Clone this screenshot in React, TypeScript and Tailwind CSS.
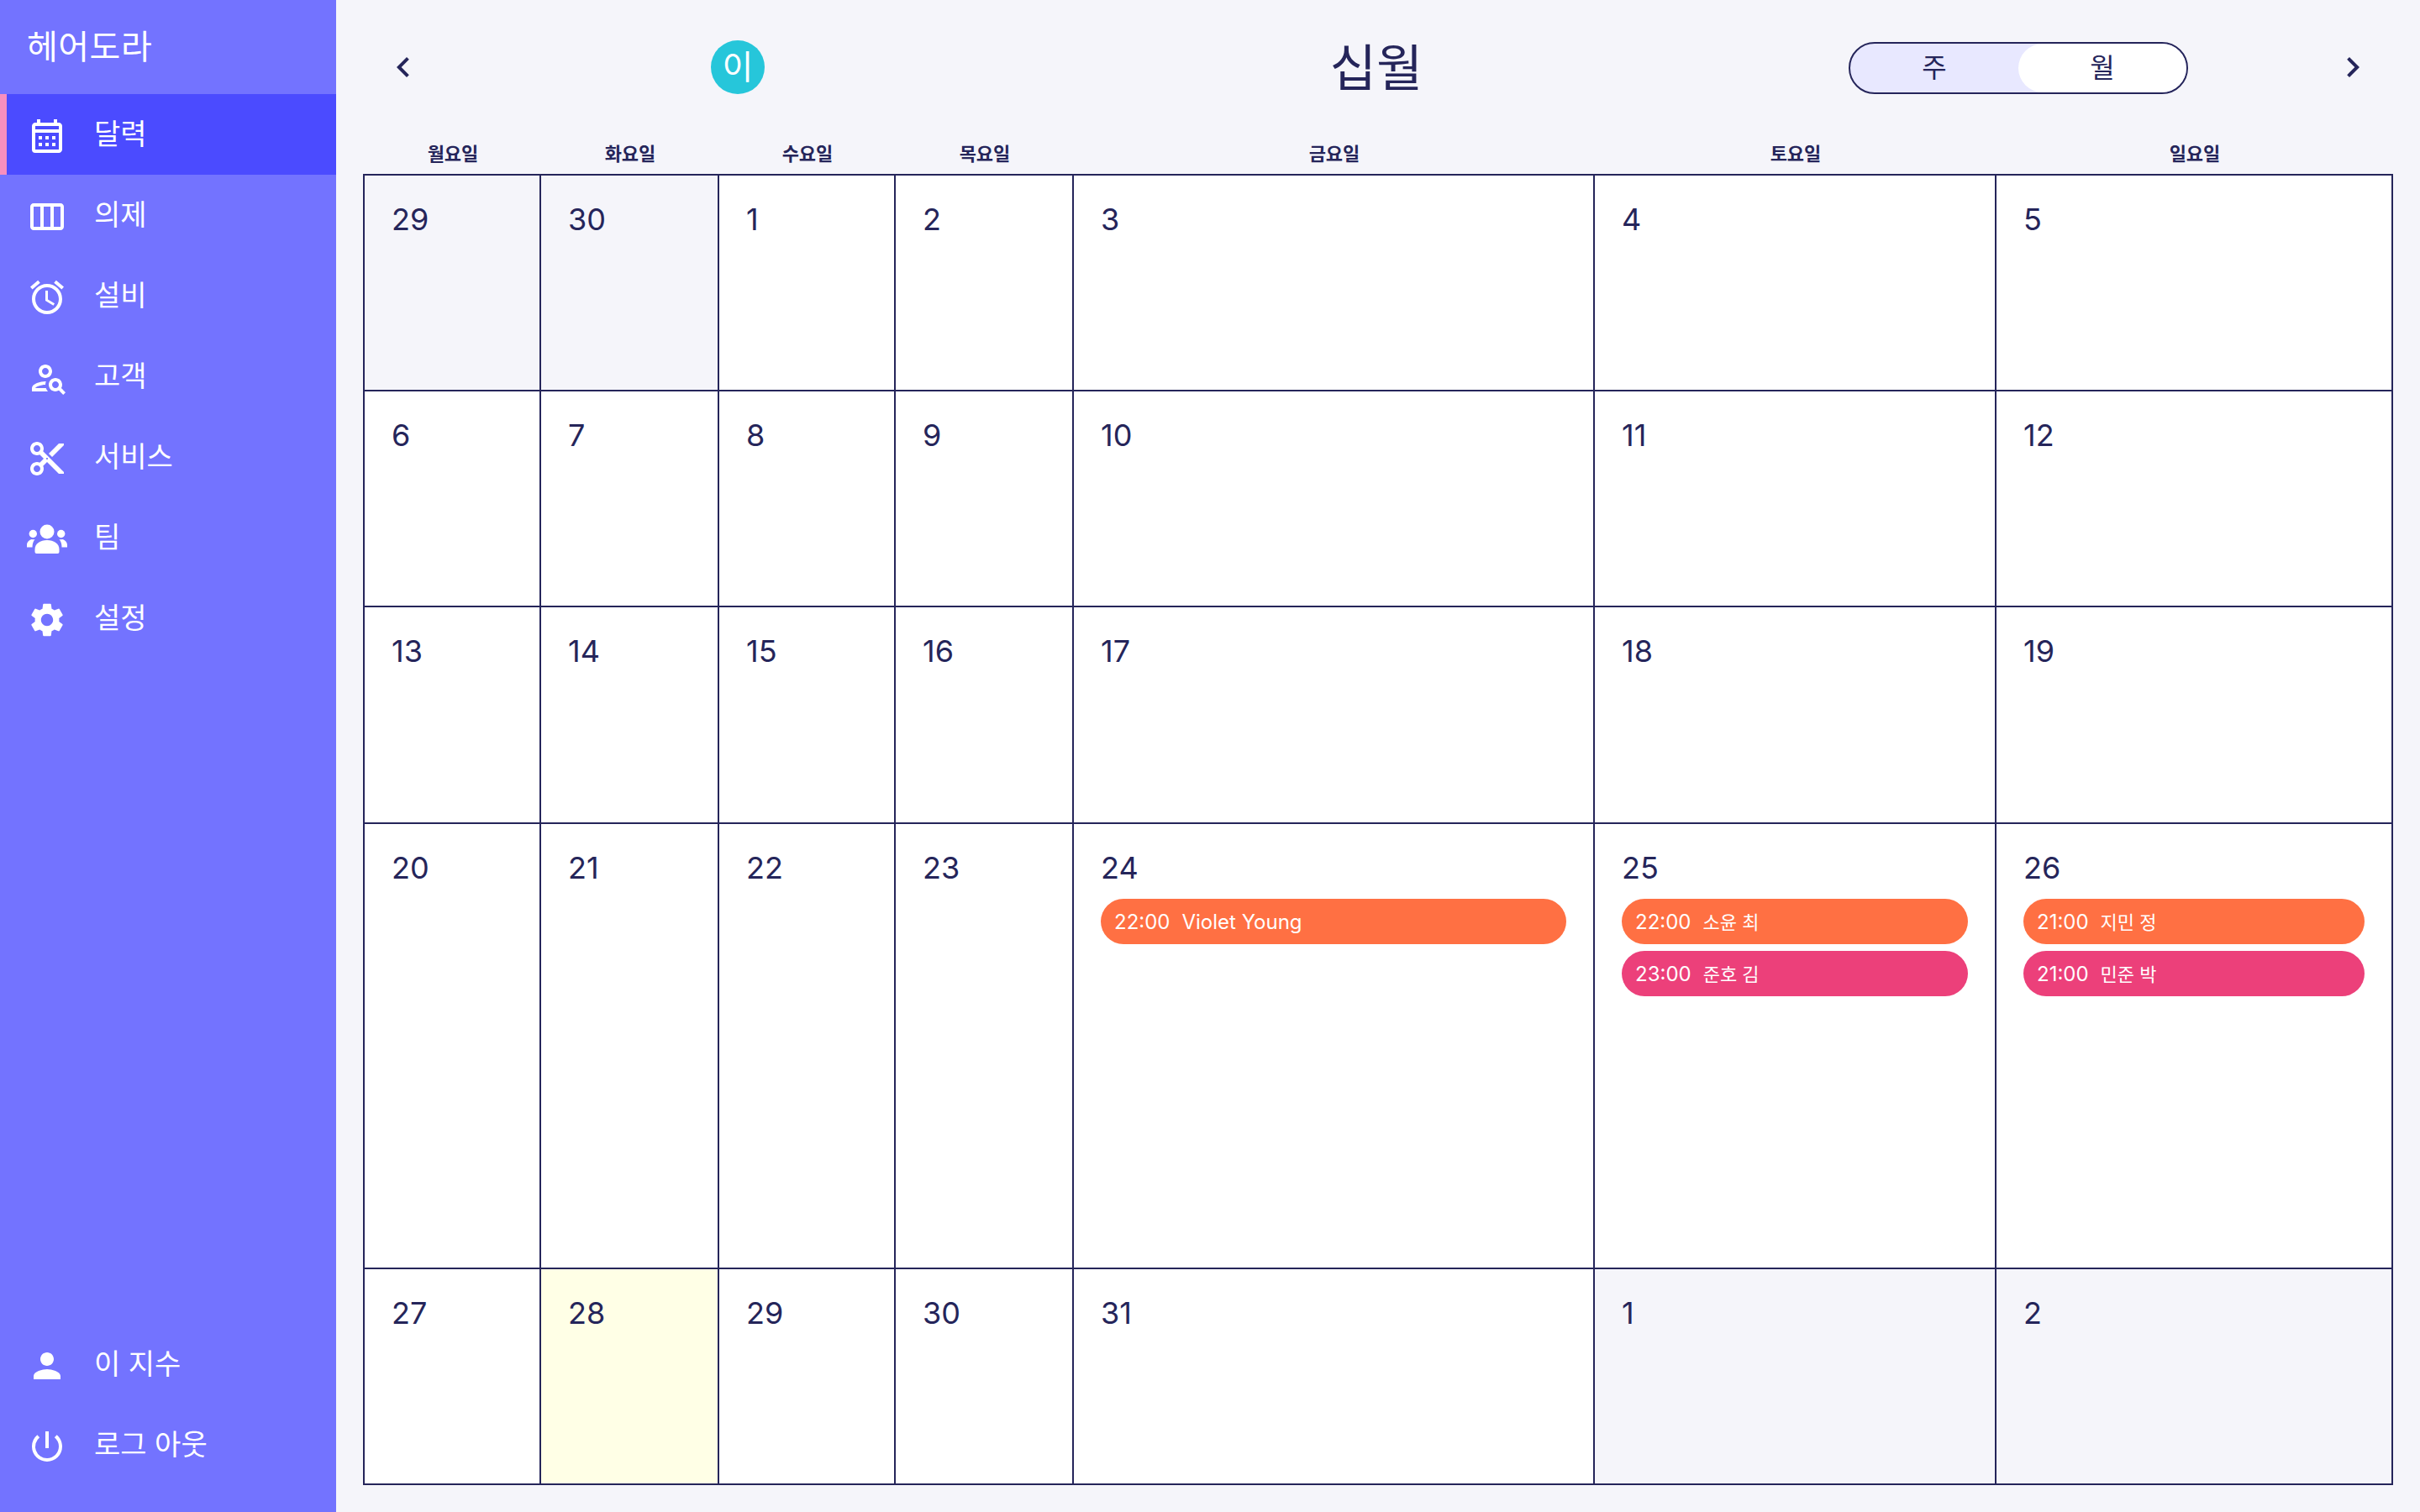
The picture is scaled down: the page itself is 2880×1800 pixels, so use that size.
import React from "react";
import {
  MdOutlineCalendarMonth,
  MdOutlineViewWeek,
  MdOutlineAccessAlarm,
  MdOutlinePersonSearch,
  MdOutlineContentCut,
  MdSettings,
  MdPerson,
  MdOutlinePowerSettingsNew,
  MdChevronLeft,
  MdChevronRight,
} from "react-icons/md";

// The team icon in the picture is heavier than the material "groups" glyph
function TeamIcon() {
  return (
    <svg width="48" height="48" viewBox="0 0 48 48" fill="currentColor">
      <circle cx="24" cy="17" r="8.5" />
      <circle cx="7.3" cy="19.5" r="4.7" />
      <circle cx="40.7" cy="19.5" r="4.7" />
      <path d="M11.5 43a2 2 0 0 1-2-2v-3c0-7 6.5-11 14.5-11s14.5 4 14.5 11v3a2 2 0 0 1-2 2z" />
      <path d="M0 35.5V33c0-4 3-6.5 6-7 1 .2 2.2.3 3.5 0-2 2.500-3 5.500-3 9.500z" />
      <path d="M48 35.5V33c0-4-3-6.500-6-7-1 .2-2.200.3-3.500 0 2 2.500 3 5.500 3 9.500z" />
    </svg>
  );
}

const navItems = [
  { label: "달력", icon: <MdOutlineCalendarMonth size={48} className="mt-[4px]" />, active: true },
  { label: "의제", icon: <MdOutlineViewWeek size={48} className="mt-[4px]" /> },
  { label: "설비", icon: <MdOutlineAccessAlarm size={48} className="mt-[4px]" /> },
  { label: "고객", icon: <MdOutlinePersonSearch size={48} className="mt-[4px] ml-[2px] -mr-[2px]" /> },
  { label: "서비스", icon: <MdOutlineContentCut size={48} className="mt-[4px]" /> },
  { label: "팀", icon: <TeamIcon /> },
  { label: "설정", icon: <MdSettings size={48} className="mt-[4px]" /> },
];

const footerItems = [
  { label: "이 지수", icon: <MdPerson size={48} className="mt-[4px]" /> },
  { label: "로그 아웃", icon: <MdOutlinePowerSettingsNew size={48} className="mt-[4px]" /> },
];

const weekdays = ["월요일", "화요일", "수요일", "목요일", "금요일", "토요일", "일요일"];

type Appt = { time: string; name: string; color: string };
type Day = { n: number; muted?: boolean; today?: boolean; appts?: Appt[] };

const orange = "bg-[#ff7043]";
const pink = "bg-[#ec407a]";

const days: Day[] = [
  { n: 29, muted: true },
  { n: 30, muted: true },
  ...[1, 2, 3, 4, 5, 6, 7, 8, 9, 10, 11, 12, 13, 14, 15, 16, 17, 18, 19, 20, 21, 22, 23].map((n) => ({ n })),
  { n: 24, appts: [{ time: "22:00", name: "Violet Young", color: orange }] },
  {
    n: 25,
    appts: [
      { time: "22:00", name: "소윤 최", color: orange },
      { time: "23:00", name: "준호 김", color: pink },
    ],
  },
  {
    n: 26,
    appts: [
      { time: "21:00", name: "지민 정", color: orange },
      { time: "21:00", name: "민준 박", color: pink },
    ],
  },
  { n: 27 },
  { n: 28, today: true },
  { n: 29 },
  { n: 30 },
  { n: 31 },
  { n: 1, muted: true },
  { n: 2, muted: true },
];

function NavRow({ item }: { item: { label: string; icon: React.ReactNode; active?: boolean } }) {
  return (
    <div
      className={`flex h-[96px] items-center ${
        item.active ? "border-l-8 border-[#f78fbf] bg-[#4b4bff] pl-[24px]" : "pl-[32px]"
      }`}
    >
      {item.icon}
      <span className="ml-[32px] text-[34px] leading-[48px]">{item.label}</span>
    </div>
  );
}

export default function App() {
  return (
    <div className="flex h-[1800px] w-[2880px] bg-[#f5f5fa] font-['Inter','Noto_Sans_CJK_KR',sans-serif] text-[#25255a]">
      {/* Sidebar */}
      <aside className="flex w-[400px] flex-col justify-between bg-[#7373ff] text-white">
        <div>
          <div className="flex h-[112px] items-center pl-[32px] text-[40px] tracking-[0.5px]">헤어도라</div>
          {navItems.map((item) => (
            <NavRow key={item.label} item={item} />
          ))}
        </div>
        <div className="pb-[32px]">
          {footerItems.map((item) => (
            <NavRow key={item.label} item={item} />
          ))}
        </div>
      </aside>

      {/* Main */}
      <main className="flex flex-1 flex-col">
        <header className="flex h-[160px] items-center pl-[56px]">
          <MdChevronLeft size={48} />
          <div className="ml-[342px] flex h-[64px] w-[64px] items-center justify-center rounded-full bg-[#26c6da] text-[40px] text-white">
            이
          </div>
          <div className="mt-[2px] ml-[670px] w-[116px] text-center text-[60px] font-normal whitespace-nowrap">십월</div>
          <div className="mt-[2px] ml-[504px] flex h-[62px] w-[404px] overflow-hidden rounded-full border-2 border-[#25255a] bg-[#e8e8ff] text-[32px]">
            <div className="flex w-[200px] items-center justify-center">주</div>
            <div className="flex flex-1 items-center justify-center rounded-full bg-white">월</div>
          </div>
          <MdChevronRight size={48} className="ml-[172px]" />
        </header>

        <div className="ml-[34px] grid w-[2414px] grid-cols-[210px_212px_210px_212px_620px_478px_472px]">
          {weekdays.map((d) => (
            <div key={d} className="h-[47px] pt-[5px] text-center text-[22px] leading-[36px] font-semibold">
              {d}
            </div>
          ))}
        </div>

        <div className="ml-[32px] grid w-[2416px] grid-cols-[210px_212px_210px_212px_620px_478px_472px] grid-rows-[257px_257px_258px_530px_257px] border-t-2 border-l-2 border-[#25255a]">
          {days.map((day, i) => (
            <div
              key={i}
              className={`border-r-2 border-b-2 border-[#25255a] px-[32px] pt-[30px] ${
                day.today ? "bg-[#ffffe6]" : day.muted ? "bg-[#f5f5fa]" : "bg-white"
              }`}
            >
              <div className="text-[36px] leading-[44px]">{day.n}</div>
              {day.appts && (
                <div className="mt-[15px] flex flex-col gap-[8px]">
                  {day.appts.map((a) => (
                    <div
                      key={a.time + a.name}
                      className={`flex h-[54px] items-center gap-[14px] rounded-full px-[16px] pt-[2px] text-[24px] text-white ${a.color}`}
                    >
                      <span>{a.time}</span>
                      <span className={/[가-힣]/.test(a.name) ? "text-[22px]" : ""}>{a.name}</span>
                    </div>
                  ))}
                </div>
              )}
            </div>
          ))}
        </div>
      </main>
    </div>
  );
}
